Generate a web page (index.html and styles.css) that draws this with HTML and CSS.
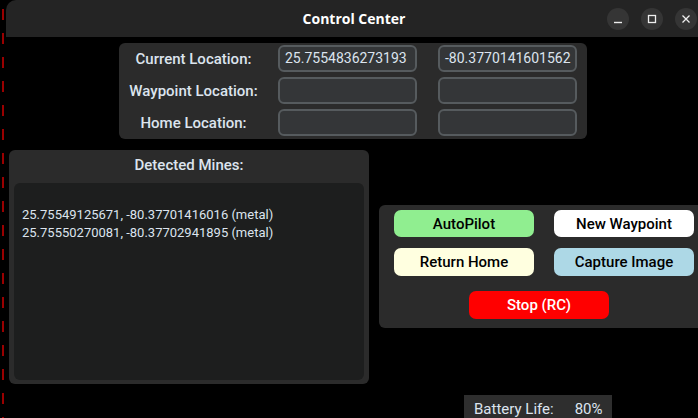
FILE: index.html
```html
<!DOCTYPE html>
<html lang="en">
<head>
<meta charset="utf-8">
<title>Control Center</title>
<link rel="stylesheet" href="styles.css">
</head>
<body>
<div class="edge"></div>
<div class="window">
  <header class="titlebar">
    <span></span>
    <span class="title">Control Center</span>
    <div class="controls">
      <span class="ctl"><svg width="10" height="10" viewBox="0 0 10 10"><path d="M1 8.5H9" stroke="#eeeeee" stroke-width="1.4"/></svg></span>
      <span class="ctl"><svg width="10" height="10" viewBox="0 0 10 10"><rect x="1.5" y="1.5" width="7" height="7" fill="none" stroke="#eeeeee" stroke-width="1.3"/></svg></span>
      <span class="ctl"><svg width="10" height="10" viewBox="0 0 10 10"><path d="M1.5 1.5L8.5 8.5M8.5 1.5L1.5 8.5" stroke="#eeeeee" stroke-width="1.3"/></svg></span>
    </div>
  </header>
  <main class="content">
    <section class="loc-frame">
      <span class="label">Current Location:</span>
      <div class="entry">25.7554836273193</div>
      <div class="entry">-80.3770141601562</div>
      <span class="label">Waypoint Location:</span>
      <div class="entry"></div>
      <div class="entry"></div>
      <span class="label">Home Location:</span>
      <div class="entry"></div>
      <div class="entry"></div>
    </section>
    <div class="lower">
      <section class="mines">
        <div class="mines-title">Detected Mines:</div>
        <div class="textbox">
          <div class="line">&nbsp;</div>
          <div class="line">25.75549125671, -80.37701416016 (metal)</div>
          <div class="line">25.75550270081, -80.37702941895 (metal)</div>
        </div>
      </section>
      <div class="right-col">
        <section class="btn-frame">
          <button class="btn green">AutoPilot</button>
          <button class="btn white">New Waypoint</button>
          <button class="btn yellow">Return Home</button>
          <button class="btn blue">Capture Image</button>
          <button class="btn red stop">Stop (RC)</button>
        </section>
        <div class="battery"><span>Battery Life:</span><span>80%</span></div>
      </div>
    </div>
  </main>
</div>
</body>
</html>
```
FILE: styles.css
```css
* { box-sizing: border-box; }
html, body { margin: 0; height: 100%; }
body {
  background: #000;
  display: flex;
  overflow: hidden;
  font-family: Roboto, "Liberation Sans", sans-serif;
  color: #dce4ee;
}
.edge {
  width: 6px;
  flex: none;
  background: repeating-linear-gradient(to bottom, transparent 0 9px, #9a0000 9px 20px, transparent 20px 24px);
  background-size: 2px 100%;
  background-position: 2px 0;
  background-repeat: no-repeat;
}
.window {
  width: 692px;
  flex: none;
  overflow: hidden;
}
.titlebar {
  height: 37px;
  background: #242424;
  border-top-left-radius: 10px;
  display: grid;
  grid-template-columns: 1fr auto 1fr;
  align-items: center;
}
.title {
  font-family: "Open Sans", sans-serif;
  font-weight: 700;
  font-size: 14px;
  color: #ffffff;
  padding-left: 4px;
}
.controls {
  display: flex;
  justify-content: flex-end;
  gap: 12px;
  padding-right: 1px;
}
.ctl {
  width: 22px;
  height: 22px;
  border-radius: 50%;
  background: #353535;
  display: flex;
  align-items: center;
  justify-content: center;
}
.content { display: flex; flex-direction: column; }
.loc-frame {
  margin: 6px 0 0 113px;
  width: 468px;
  height: 96px;
  background: #2b2b2b;
  border-radius: 6px;
  padding: 2px 10px 2px 0;
  display: grid;
  grid-template-columns: 159px 160px 139px;
  grid-template-rows: repeat(3, 27px);
  row-gap: 5px;
  align-items: center;
}
.label {
  font-size: 15px;
  font-weight: 500;
  text-align: center;
  padding-right: 10px;
}
.entry {
  width: 139px;
  height: 27px;
  border: 2px solid #565b5e;
  background: #343638;
  border-radius: 6px;
  font-size: 14px;
  line-height: 23px;
  padding-left: 5px;
  white-space: nowrap;
  overflow: hidden;
}
.lower { display: flex; margin-top: 11px; }
.mines {
  flex: none;
  margin-left: 3px;
  width: 360px;
  height: 234px;
  background: #2b2b2b;
  border-radius: 6px;
  padding: 4px 5px 4px 5px;
  display: flex;
  flex-direction: column;
}
.mines-title {
  text-align: center;
  font-size: 15px;
  font-weight: 500;
  height: 29px;
  line-height: 22px;
}
.textbox {
  flex: 1;
  background: #1d1e1e;
  border-radius: 6px;
  padding: 5px 8px;
  font-size: 13px;
}
.line { height: 18px; line-height: 18px; }
.right-col { flex: none; margin-left: 10px; display: flex; flex-direction: column; }
.btn-frame {
  margin-top: 55px;
  width: 330px;
  height: 123px;
  background: #2b2b2b;
  border-radius: 6px 0 0 6px;
  padding: 5px 0 0 15px;
  display: grid;
  grid-template-columns: 140px 140px;
  grid-template-rows: 27px 28px 28px;
  column-gap: 20px;
  row-gap: 11px;
}
.btn {
  border: none;
  border-radius: 7px;
  font-family: Roboto, sans-serif;
  font-size: 15px;
  font-weight: 500;
  color: #000;
  padding: 0;
  height: 27px;
}
.green { background: #90ee90; }
.white { background: #ffffff; }
.yellow { background: #ffffe0; height: 28px; }
.blue { background: #add8e6; height: 28px; }
.red { background: #ff0000; color: #ffffff; }
.stop {
  grid-column: 1 / 3;
  width: 140px;
  height: 28px;
  margin: 4px 0 0 75px;
}
.battery {
  margin: 67px 0 0 85px;
  width: 148px;
  height: 30px;
  background: #2e2e2e;
  display: flex;
  gap: 21px;
  padding: 5px 0 0 10px;
  font-size: 15px;
  line-height: 18px;
}
```
